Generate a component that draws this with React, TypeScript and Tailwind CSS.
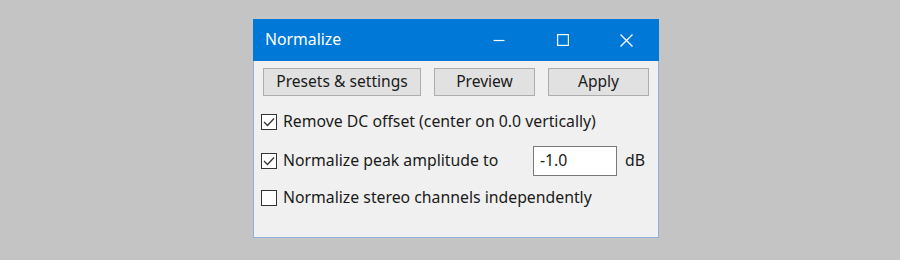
import React from "react";

function CheckBox({ checked }: { checked?: boolean }) {
  return (
    <span className="flex h-[16px] w-[16px] shrink-0 items-center justify-center border border-[#333333] bg-white">
      {checked && (
        <svg width="12" height="10" viewBox="0 0 12 10" fill="none">
          <path d="M1 5 L4.5 8.5 L11 1.5" stroke="#333333" strokeWidth="1.3" />
        </svg>
      )}
    </span>
  );
}

function WinButton({ label, className }: { label: string; className: string }) {
  return (
    <button className={`flex h-[28px] items-center justify-center border border-[#adadad] bg-[#e1e1e1] text-[15.6px] text-[#1a1a1a] ${className}`}>
      {label}
    </button>
  );
}

export default function App() {
  return (
    <div
      className="h-[260px] w-[900px] bg-[#c4c4c4] pl-[253px] pt-[19px]"
      style={{ fontFamily: '"Noto Sans", "Open Sans", sans-serif' }}
    >
      <div className="flex h-[219px] w-[406px] flex-col border border-[#8fb1d8] bg-[#f0f0f0]">
        <div className="-mx-px -mt-px flex h-[42px] items-center bg-[#0078d7] pl-[12px] text-white">
          <span className="flex-1 text-[15.8px]">Normalize</span>
          <div className="flex h-full items-center">
            <span className="flex w-[64px] justify-center">
              <svg width="12" height="12" viewBox="0 0 12 12"><path d="M0.5 6.5 H11.5" stroke="white" strokeWidth="1.2" /></svg>
            </span>
            <span className="flex w-[64px] justify-center">
              <svg width="12" height="12" viewBox="0 0 12 12"><rect x="0.6" y="0.6" width="10.8" height="10.8" fill="none" stroke="white" strokeWidth="1.2" /></svg>
            </span>
            <span className="flex w-[64px] justify-center pr-[1px]">
              <svg width="13" height="13" viewBox="0 0 13 13"><path d="M0.5 0.5 L12.5 12.5 M12.5 0.5 L0.5 12.5" stroke="white" strokeWidth="1.3" /></svg>
            </span>
          </div>
        </div>
        <div className="flex gap-[13px] pl-[9px] pt-[7px]">
          <WinButton label="Presets & settings" className="w-[158px]" />
          <WinButton label="Preview" className="w-[101px]" />
          <WinButton label="Apply" className="w-[101px]" />
        </div>
        <div className="flex flex-col pl-[7px] text-[15.8px] text-[#1a1a1a]">
          <label className="mt-[13px] flex h-[26px] items-center gap-[6px]">
            <CheckBox checked />
            <span>Remove DC offset (center on 0.0 vertically)</span>
          </label>
          <div className="mt-[11px] flex h-[30px] items-center">
            <label className="flex w-[272px] items-center gap-[6px]">
              <CheckBox checked />
              <span>Normalize peak amplitude to</span>
            </label>
            <span className="flex h-[30px] w-[84px] items-center border border-[#7a7a7a] bg-white pl-[6px]">-1.0</span>
            <span className="ml-[8px]">dB</span>
          </div>
          <label className="mt-[9px] flex h-[26px] items-center gap-[6px]">
            <CheckBox />
            <span>Normalize stereo channels independently</span>
          </label>
        </div>
      </div>
    </div>
  );
}
